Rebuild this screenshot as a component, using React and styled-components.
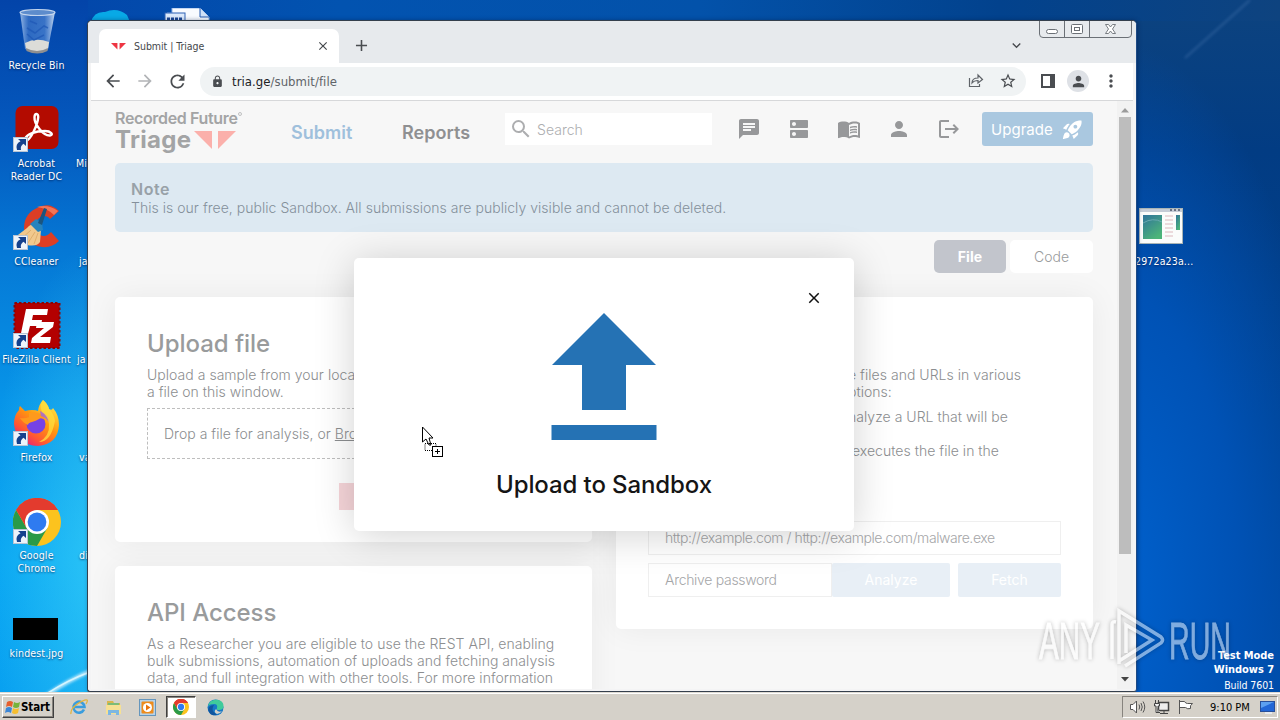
import styled, { createGlobalStyle } from "styled-components";
import {
    MdAdd, MdArrowBack, MdArrowForward, MdChat, MdClose, MdDns, MdExpandMore, MdLock, MdLogout,
    MdMenuBook, MdMoreVert, MdPerson, MdRefresh, MdRocketLaunch, MdSearch, MdStarOutline
} from "react-icons/md";

const SYSTEM_FONT = `"DejaVu Sans Condensed", "DejaVu Sans", sans-serif`;
const PAGE_FONT = `Inter, sans-serif`;

const DESKTOP_ICONS = [
    { label: "Recycle Bin", icon: "bin" },
    { label: "Acrobat Reader DC", icon: "acrobat", shortcut: true },
    { label: "CCleaner", icon: "ccleaner", shortcut: true },
    { label: "FileZilla Client", icon: "filezilla", shortcut: true },
    { label: "Firefox", icon: "firefox", shortcut: true },
    { label: "Google Chrome", icon: "chrome", shortcut: true },
    { label: "kindest.jpg", icon: "picture" },
];

const HIDDEN_LABELS = [
    { top: 157, left: 76, label: "Mi" },
    { top: 255, left: 79, label: "ja" },
    { top: 353, left: 77, label: "ja" },
    { top: 451, left: 79, label: "va" },
    { top: 549, left: 79, label: "di" },
];

const ChromeLogo = ({ size = 48 }) => (
    <svg width={size} height={size} viewBox="0 0 48 48">
        <circle cx="24" cy="24" r="24" fill="#fcc31e" />
        <path d="M24 24L3.2 12A24 24 0 0 1 44.8 12H24z" fill="#e33b2e" />
        <path d="M3.2 12A24 24 0 0 0 24 48L34.4 30 24 24 13.6 30z" fill="#2a9a48" />
        <path d="M3.2 12L13.6 30 24 12h20.8A24 24 0 0 0 3.2 12z" fill="#e33b2e" />
        <circle cx="24" cy="24" r="12" fill="#fff" />
        <circle cx="24" cy="24" r="9.4" fill="#2f7bf0" />
    </svg>
);

const Pictures = {
    bin: () => (
        <svg width="48" height="48" viewBox="0 0 48 48">
            <defs>
                <linearGradient id="glass" x1="0" x2="1">
                    <stop offset="0" stopColor="#b9d3f3" stopOpacity=".8" />
                    <stop offset=".25" stopColor="#4a80cf" stopOpacity=".6" />
                    <stop offset=".7" stopColor="#5d90d8" stopOpacity=".6" />
                    <stop offset="1" stopColor="#dbe8f8" stopOpacity=".9" />
                </linearGradient>
            </defs>
            <path d="M7 4L12 41Q24 48 35 41L42 4z" fill="url(#glass)" />
            <path d="M12 35q11-6 24-1l-1 7q-11 6-22 0z" fill="#dcdcd8" />
            <path d="M13 40q11 6 22 0l-.5 3q-10 5-21 0z" fill="#8f8f90" />
            <ellipse cx="24.500" cy="4.500" rx="17.500" ry="3" fill="#5d8ccc" stroke="#c4d6ee" strokeWidth="1.200" />
            <path d="M14 20l8 5 9-7 4 2M17 13l7 3M14 26l7 6 10-5" stroke="#1e57b5" strokeWidth="1.500" fill="none" opacity=".7" />
        </svg>
    ),
    acrobat: () => (
        <svg width="48" height="48" viewBox="0 0 48 48">
            <rect x="2.500" y="0" width="43" height="43" rx="7" fill="#b30b00" />
            <path d="M12 33c2-5 10-8 20-8 6 0 9 4 5 4.500C30 30 21 18 21.500 11c.3-4 4-4 3.700.3C24.500 19 18 33 13.500 34.500c-2 .6-2.200-.7-1.500-1.500z" stroke="#fff" strokeWidth="2.400" fill="none" />
        </svg>
    ),
    ccleaner: () => (
        <svg width="48" height="48" viewBox="0 0 48 48">
            <path d="M46 7Q37-2 26 3 11 9 11 24q1 17 18 19 10 1 17-6l-8-9q-5 6-11 3-5-3-5-8 1-10 9-11 4 0 6 3z" fill="#dc3e25" />
            <path d="M24 3Q35 0 45 7l-4 4Q34 4 24 3z" fill="#f27558" />
            <path d="M27 20q-8-2-13 4L1 34l13 7q10 2 13-3l1-12z" fill="#f1c88d" />
            <path d="M8 35l10-9M15 39l7-11M21 40l4-11" stroke="#dfae6c" strokeWidth="1" />
            <path d="M17 20l6-5 6 4 1 7-5 2z" fill="#2683bd" />
            <path d="M25 19l6-15 3 1-5 16z" fill="#1b557f" />
        </svg>
    ),
    filezilla: () => (
        <svg width="48" height="48" viewBox="0 0 48 48">
            <rect x="1.500" y="1" width="45" height="45" fill="#b30000" stroke="#8d0303" strokeWidth="2" strokeDasharray="2.500 2" />
            <path d="M13 7h22l-1 6H20l-1 5h10l-1 6H17l-3 12H7z" fill="#fff" />
            <path d="M24 20h17l-1 5-13 10h11l-1 6H18l1-5 12-10h-8z" fill="#fff" />
        </svg>
    ),
    firefox: () => (
        <svg width="48" height="48" viewBox="0 0 48 48">
            <defs>
                <linearGradient id="fox" x1=".9" y1="0" x2=".2" y2="1">
                    <stop offset="0" stopColor="#fff44f" />
                    <stop offset=".45" stopColor="#ff980e" />
                    <stop offset=".75" stopColor="#ff5634" />
                    <stop offset="1" stopColor="#e31587" />
                </linearGradient>
            </defs>
            <path d="M30 0q5 4 6 9 3 2 4-1 6 7 6 17-1 19-21 21Q3 45 1 24q0-9 5-14 0-3 1-4l5 5q4-1 7-1 4 0 6 1 1-7 5-11z" fill="url(#fox)" />
            <circle cx="23" cy="24" r="9.500" fill="#7542e5" />
            <path d="M16 13q12-3 16 7-4-3-6-1-3 2-7 3-4 1-4 3-5-2-8-7 5 1 9-1z" fill="#ff9a1c" />
            <path d="M27 11q9 3 10 13-3-6-9-8z" fill="#9059ff" opacity=".7" />
            <path d="M30 0q5 4 6 9 5 5 6 12-4 21-16 21 11-6 10-18-1-8-7-12-3-6 1-12z" fill="#ffdf3e" opacity=".75" />
        </svg>
    ),
    chrome: () => <ChromeLogo />,
    picture: () => (
        <svg width="48" height="48" viewBox="0 0 48 48">
            <rect x="0" y="22" width="45" height="22" fill="#000" />
        </svg>
    ),
};

const ShortcutArrow = () => (
    <Shortcut>
        <svg width="15" height="15" viewBox="0 0 15 15">
            <rect x=".5" y=".5" width="14" height="14" fill="#edf3fa" stroke="#b8c4d4" />
            <path d="M5 2h8v7l-2.500-2.200Q7 9 8 13H4Q2 7 7.500 4.300z" fill="#15418d" />
        </svg>
    </Shortcut>
);

const TriageMark = ({ width, height, color }) => (
    <svg width={width} height={height} viewBox="0 0 42 19">
        <path d="M0 0h18v18zM24 0h18L24 18z" fill={color} />
    </svg>
);

const Wallpaper = () => (
    <Backdrop width="1280" height="720" viewBox="0 0 1280 720">
        <defs>
            <filter id="soft"><feGaussianBlur stdDeviation="1.500" /></filter>
        </defs>
        <path d="M1185 58L1250 0" stroke="#5b86bd" strokeWidth="1.500" opacity=".5" filter="url(#soft)" />
        <path d="M44 697Q68 680 95 669" stroke="#fff" strokeWidth="3" fill="none" opacity=".8" filter="url(#soft)" />
        <path d="M48 693Q68 680 90 672" stroke="#d4f5ff" strokeWidth="1.500" fill="none" />
    </Backdrop>
);

const DesktopIcons = () => (
    <>
        <IconColumn>
            {DESKTOP_ICONS.map(({ label, icon, shortcut }) => {
                const Picture = Pictures[icon];
                return (
                    <DesktopIcon key={label}>
                        <IconPicture>
                            <Picture />
                            {shortcut && <ShortcutArrow />}
                        </IconPicture>
                        <IconLabel>{label}</IconLabel>
                    </DesktopIcon>
                )
            })}
        </IconColumn>
        {HIDDEN_LABELS.map(({ top, left, label }) => <LooseLabel key={top} top={top} left={left}>{label}</LooseLabel>)}
        <Floating top={8} left={91}>
            <svg width="122" height="16" viewBox="0 0 122 16">
                <path d="M0 14Q3 3 14 4q12-5 22 3l3 7z" fill="#08a9e6" />
                <path d="M81 0h28l9 9v5H76V5h5z" fill="#f8fbff" stroke="#8fb3e4" />
                <path d="M109 0v9h9" fill="#cfe0f7" stroke="#245bb0" />
                <rect x="74" y="5" width="20" height="10" fill="#dbe9fb" stroke="#2f63b5" />
                <path d="M76 11h16" stroke="#1c4795" strokeWidth="3" strokeDasharray="3 1" />
            </svg>
        </Floating>
        <Floating top={208} left={1139}>
            <svg width="44" height="37" viewBox="0 0 44 37">
                <defs>
                    <linearGradient id="thumb" x2=".6" y2="1">
                        <stop offset="0" stopColor="#2f739b" />
                        <stop offset="1" stopColor="#4db479" />
                    </linearGradient>
                </defs>
                <rect x=".5" y=".5" width="43" height="35" fill="#fbfcfb" stroke="#a9b4b5" />
                <path d="M1 2.500h42" stroke="#c5ccd6" strokeWidth="3" />
                <path d="M31 2h11" stroke="#4c5668" strokeWidth="1.500" strokeDasharray="2 2" />
                <rect x="4" y="7" width="19" height="24" fill="url(#thumb)" />
                <path d="M4 15q10-6 19-1" stroke="#69a9b0" fill="none" />
                <path d="M26 8h8M26 12h8M26 16h8M26 20h8M26 24h8M26 28h8" stroke="#dcb8bd" />
                <rect x="37" y="7" width="4" height="15" fill="url(#thumb)" />
            </svg>
        </Floating>
        <LooseLabel top={255} left={1135}>2972a23a...</LooseLabel>
        <BuildInfo>
            <b>Test Mode</b>
            <b>Windows 7</b>
            <span>Build 7601</span>
        </BuildInfo>
    </>
);

const BrowserChrome = () => (
    <>
        <TabStrip>
            <Tab>
                <TriageMark width={15} height={7} color="#ee3542" />
                <TabTitle>Submit | Triage</TabTitle>
                <MdClose size={14} />
            </Tab>
            <NewTab><MdAdd size={19} /></NewTab>
            <TabSearch><MdExpandMore size={17} /></TabSearch>
            <Caption>
                <svg width="93" height="17" viewBox="0 0 93 17" fill="none" stroke="#6b7076">
                    <path d="M.5 0v13q0 3.500 3.500 3.500h85q3.500 0 3.500-3.500V0M25.500 0v16M50.500 0v16" />
                    <rect x="7.500" y="8.500" width="11" height="4" rx="2" fill="#fff" />
                    <rect x="32.500" y="3.500" width="11" height="9" rx="1" fill="#fff" />
                    <rect x="35.500" y="6.500" width="5" height="3" />
                    <path d="M66.500 3.500h3l2 2.500 2-2.500h3L73.500 8l3 4.500h-3l-2-2.500-2 2.500h-3l3-4.500z" fill="#fff" strokeWidth=".9" />
                </svg>
            </Caption>
        </TabStrip>
        <Toolbar>
            <MdArrowBack size={20} />
            <MdArrowForward size={20} color="#b2b4b7" />
            <MdRefresh size={21} />
            <AddressBar>
                <MdLock size={13} />
                <Address>tria.ge<span>/submit/file</span></Address>
                <svg width="16" height="16" viewBox="0 0 16 16" fill="none" stroke="#5f6368" strokeWidth="1.200">
                    <path d="M1.500 5v8.500h10V11M4 10q0-5 6-5V2l4.500 4.500L10 10V7.500Q6 7.500 4 10z" />
                </svg>
                <StarButton><MdStarOutline size={18} /></StarButton>
            </AddressBar>
            <svg width="14" height="14" viewBox="0 0 14 14">
                <path d="M0 0h14v14H0zM2 2v10h7V2z" fill="#4a4d51" fillRule="evenodd" />
            </svg>
            <Avatar><MdPerson size={17} /></Avatar>
            <MdMoreVert size={20} />
        </Toolbar>
    </>
);

const SiteHeader = () => (
    <Header>
        <Logo>
            <LogoTop>Recorded Future<LogoDot /></LogoTop>
            <LogoBottom>Triage <TriageMark width={42} height={19} color="#fbb0ab" /></LogoBottom>
        </Logo>
        <NavLink color="#9fc0dc" width={111}>Submit</NavLink>
        <NavLink color="#8f9092" width={102}>Reports</NavLink>
        <SearchBox><MdSearch size={24} /><span>Search</span></SearchBox>
        <HeaderIcons>
            <MdChat size={24} />
            <MdDns size={24} />
            <MdMenuBook size={24} />
            <MdPerson size={24} />
            <MdLogout size={24} />
        </HeaderIcons>
        <Upgrade>Upgrade <MdRocketLaunch size={23} /></Upgrade>
    </Header>
);

const LeftColumn = () => (
    <Column>
        <Card height={245}>
            <Title>Upload file</Title>
            <Text>Upload a sample from your local<br />a file on this window.</Text>
            <DropZone>Drop a file for analysis, or&nbsp;<u>Browse</u></DropZone>
            <PinkButton />
        </Card>
        <Card height={180}>
            <Title>API Access</Title>
            <Text>
                As a Researcher you are eligible to use the REST API, enabling<br />
                bulk submissions, automation of uploads and fetching analysis<br />
                data, and full integration with other tools. For more information
            </Text>
        </Card>
    </Column>
);

const RightColumn = () => (
    <Column>
        <Card height={332}>
            <Description>
                <Text>e files and URLs in various<br />ptions:</Text>
                <Text>nalyze a URL that will be</Text>
                <Text>&nbsp;executes the file in the</Text>
            </Description>
            <Field tight>http://example.com / http://example.com/malware.exe</Field>
            <FormRow>
                <Field width={184}>Archive password</Field>
                <PaleButton width={118}>Analyze</PaleButton>
                <PaleButton width={103} gap={8}>Fetch</PaleButton>
            </FormRow>
        </Card>
    </Column>
);

const UploadModal = () => (
    <Modal>
        <CloseButton><MdClose size={18} /></CloseButton>
        <svg width="106" height="128" viewBox="0 0 106 128" fill="#2572b4">
            <path d="M53 0l52 52H75v45H31V52H1zM.5 112h105v15H.5z" />
        </svg>
        <ModalTitle>Upload to Sandbox</ModalTitle>
    </Modal>
);

const Taskbar = () => (
    <Bar>
        <StartButton>
            <svg width="16" height="16" viewBox="0 0 16 16">
                <path d="M2 3q3-2 6 0L7 8Q4 6 1 8z" fill="#e65e2c" />
                <path d="M9 3q3 2 6 0l-1 5q-3 2-6 0z" fill="#76b33c" />
                <path d="M1 9q3-2 6 0l-1 5q-3-2-6 0z" fill="#3b86d6" />
                <path d="M8 9q3 2 6 0l-1 5q-3 2-6 0z" fill="#f6be30" />
            </svg>
            Start
        </StartButton>
        <TaskItem>
            <svg width="18" height="18" viewBox="0 0 18 18" fill="none">
                <path d="M14 11.500A5.500 5.500 0 1 1 14.500 9H5" stroke="#3a9ddd" strokeWidth="2.600" />
                <path d="M1 16Q0 11 8 5.500 15 1 17 2q1 1-1 4" stroke="#e2b43b" strokeWidth="1.300" />
            </svg>
        </TaskItem>
        <TaskItem>
            <svg width="17" height="17" viewBox="0 0 17 17">
                <path d="M2 2h6l1 2h6v4H2z" fill="#d9b64c" />
                <path d="M3 4h11v5H3z" fill="#7cbc78" />
                <path d="M1 6h15v9H1z" fill="#f6e094" />
                <path d="M3 16v-5h11v5h-3v-2H6v2z" fill="#7db7e2" />
            </svg>
        </TaskItem>
        <TaskItem>
            <svg width="17" height="17" viewBox="0 0 17 17">
                <rect x=".5" y=".5" width="16" height="16" fill="#b6d2e8" stroke="#6596bd" />
                <rect x="2.500" y="2.500" width="12" height="12" rx="1" fill="#ee8b1b" />
                <circle cx="8.500" cy="8.500" r="4.500" fill="#fff" />
                <path d="M7 5.500v6l4.500-3z" fill="#e8730c" />
            </svg>
        </TaskItem>
        <TaskItem active><ChromeLogo size={16} /></TaskItem>
        <TaskItem>
            <svg width="17" height="17" viewBox="0 0 17 17">
                <circle cx="8.500" cy="8.500" r="8" fill="#1678c6" />
                <path d="M1 7Q3 0 10 .7q7 1 6.500 7Q16 11 12 11q-3 0-2-2 1-4-3-4-4 0-6 2z" fill="#3fcb9b" />
                <path d="M7 6Q3 12 10 15.500 4 18 1.500 12 0 7 7 6z" fill="#10559f" />
                <path d="M9 10q2 4 6 2-2 3-5 3-4-2-1-5z" fill="#d5d1c9" />
            </svg>
        </TaskItem>
        <Tray>
            <svg width="17" height="16" viewBox="0 0 17 16" fill="#fff" stroke="#555">
                <path d="M1.500 5.500H4L7.500 2v12L4 10.500H1.500z" />
                <path d="M10 5.500q1.500 2.500 0 5M12 4q2.500 4 0 8M14 2.500q3.500 5.500 0 11" fill="none" />
            </svg>
            <svg width="17" height="16" viewBox="0 0 17 16" fill="#eee" stroke="#444">
                <rect x="5.500" y="3.500" width="10" height="8" strokeWidth="1.500" />
                <path d="M7 14.500h8M11 12v2M2.500 1v3M5.500 1v3M1.500 4.500h5V7H5v6.500h2M1.500 4.500V7H3v6.500h2" />
            </svg>
            <svg width="17" height="16" viewBox="0 0 17 16" fill="#fff" stroke="#555">
                <path d="M2.500 1v14M2.500 2.500h5q1 2 3 2h5q-3 2-2 5-3 1-5-1h-6z" />
            </svg>
            <Clock>9:10 PM</Clock>
            <svg width="15" height="14" viewBox="0 0 15 14">
                <rect x=".5" y="1.500" width="14" height="10" fill="#2267d6" stroke="#284f99" />
                <path d="M1 2h13L1 8z" fill="#5ca0f0" />
                <path d="M5 13h7" stroke="#edf2fa" strokeWidth="1.500" />
            </svg>
        </Tray>
    </Bar>
);

const Watermark = () => (
    <WatermarkSvg width="200" height="70" viewBox="0 0 200 70">
        <g fill="#fff" stroke="#fff" strokeWidth=".8" fontFamily="Liberation Sans Narrow, Liberation Sans, sans-serif" fontSize="52">
            <text x="4" y="52" textLength="61" lengthAdjust="spacingAndGlyphs">ANY</text>
            <text x="134" y="52" textLength="62" lengthAdjust="spacingAndGlyphs">RUN</text>
        </g>
        <g fill="none" stroke="#fff" strokeWidth="3.500">
            <path d="M77 52V17q0-3 4-2M84 57V4l42 26q3 3 0 6L90 59M91 46V18l26 15-33 21" />
        </g>
    </WatermarkSvg>
);

const Cursor = () => (
    <Floating top={426} left={421}>
        <svg width="24" height="33" viewBox="0 0 24 33" fill="#fff" stroke="#000">
            <path d="M1.500 1v15l3.500-3 3 6h2l-2-7h4z" />
            <path d="M4 17.500h11v7H4z" fill="none" strokeDasharray="1 1" />
            <rect x="11.500" y="20.500" width="10" height="10" />
            <path d="M14 25.500h5M16.500 23v5" />
        </svg>
    </Floating>
);

export default function App() {
    return (
        <Desktop>
            <GlobalStyle />
            <Wallpaper />
            <DesktopIcons />
            <Window>
                <BrowserChrome />
                <Viewport>
                    <Page>
                        <SiteHeader />
                        <Note>
                            <b>Note</b>
                            <span>This is our free, public Sandbox. All submissions are publicly visible and cannot be deleted.</span>
                        </Note>
                        <Switcher>
                            <SwitchButton width={72} active>File</SwitchButton>
                            <SwitchButton width={83}>Code</SwitchButton>
                        </Switcher>
                        <Columns>
                            <LeftColumn />
                            <RightColumn />
                        </Columns>
                        <UploadModal />
                    </Page>
                    <Scrollbar>
                        <svg width="8" height="5" viewBox="0 0 8 5"><path d="M0 4.500L4 0l4 4.500z" fill="#9b9b9b" /></svg>
                        <Thumb />
                        <svg width="8" height="5" viewBox="0 0 8 5"><path d="M0 0h8L4 4.500z" fill="#444" /></svg>
                    </Scrollbar>
                </Viewport>
            </Window>
            <Watermark />
            <Cursor />
            <Taskbar />
        </Desktop>
    )
}

const GlobalStyle = createGlobalStyle`
    body {
        margin: 0;
        overflow: hidden;
    }
    * {
        box-sizing: border-box;
    }
    svg {
        display: block;
        flex: none;
    }
`

const Desktop = styled.div`
    position: relative;
    width: 1280px;
    height: 720px;
    overflow: hidden;
    display: flex;
    flex-direction: column;
    justify-content: flex-end;
    font-family: ${SYSTEM_FONT};
    background:
        radial-gradient(ellipse 120px 320px at 105px 560px, rgba(70, 220, 250, 0.6), transparent),
        linear-gradient(180deg, #0344a9 0, #0458bd 130px, #0578d5 250px, #0794e8 400px, #08a5f2 560px, #079ff0 692px) left / 88px 100% no-repeat,
        linear-gradient(90deg, #0344a9 0, #0253b0 340px, #0352aa 700px, #02428d 1000px, #0e437f 1280px) top / 100% 21px no-repeat,
        radial-gradient(ellipse 230px 550px at 1110px 590px, #0062cf, #0052b5 55%, transparent),
        linear-gradient(180deg, #0d437f 0, #023c83 150px, #00418f 420px, #0048a0 692px);
`

const Backdrop = styled.svg`
    position: absolute;
    inset: 0;
`

const Floating = styled.div`
    position: absolute;
    top: ${(props) => props.top}px;
    left: ${(props) => props.left}px;
`

const IconColumn = styled.div`
    position: absolute;
    top: 8px;
    left: 0;
    width: 73px;
`

const DesktopIcon = styled.div`
    height: 98px;
    display: flex;
    flex-direction: column;
    align-items: center;
`

const IconPicture = styled.div`
    position: relative;
    height: 51px;
    flex: none;
`

const Shortcut = styled.div`
    position: absolute;
    left: 0;
    bottom: 5px;
`

const IconLabel = styled.div`
    width: 72px;
    text-align: center;
    color: #fff;
    font-size: 10.5px;
    line-height: 13px;
    letter-spacing: 0.15px;
    text-wrap: balance;
    text-shadow: 0 1px 2px rgba(0, 20, 70, 0.7);
`

const LooseLabel = styled(IconLabel)`
    position: absolute;
    top: ${(props) => props.top}px;
    left: ${(props) => props.left}px;
    text-align: left;
`

const BuildInfo = styled.div`
    position: absolute;
    top: 649px;
    right: 6px;
    display: flex;
    flex-direction: column;
    align-items: flex-end;
    color: #fff;
    font-size: 11px;
    line-height: 14px;
    b {
        letter-spacing: -0.05px;
    }
    span {
        font-size: 10.5px;
        letter-spacing: -0.1px;
        margin-top: 1px;
    }
`

const Window = styled.div`
    position: absolute;
    top: 20px;
    left: 87px;
    width: 1050px;
    height: 672px;
    padding: 0 3px 2px;
    display: flex;
    flex-direction: column;
    background: #f4f4f5;
    border: 1px solid #35404d;
    border-right-color: #1d4a85;
    border-radius: 5px 5px 3px 3px;
    box-shadow: 1px 0 4px rgba(0, 20, 60, 0.4);
    overflow: hidden;
`

const TabStrip = styled.div`
    height: 42px;
    flex: none;
    display: flex;
    align-items: flex-start;
    margin: 0 -3px;
    padding-left: 11px;
    background: #e7eaed;
`

const Tab = styled.div`
    width: 240px;
    height: 34px;
    margin-top: 8px;
    padding: 0 9px 0 12px;
    display: flex;
    align-items: center;
    background: #fff;
    border-radius: 7px 7px 0 0;
    color: #45484c;
`

const TabTitle = styled.div`
    flex: 1;
    margin-left: 8px;
    font-size: 10.5px;
    letter-spacing: -0.05px;
`

const NewTab = styled.div`
    margin: 15px 0 0 13px;
    color: #4a4d51;
`

const TabSearch = styled.div`
    margin: 16px 14px 0 auto;
    color: #4a4d51;
`

const Caption = styled.div`
    margin-right: 4px;
`

const Toolbar = styled.div`
    height: 38px;
    flex: none;
    display: flex;
    align-items: center;
    gap: 12px;
    padding: 0 12px 1px;
    background: #fff;
    border-bottom: 1px solid #d7d8da;
    color: #4a4d51;
`

const AddressBar = styled.div`
    flex: 1;
    height: 29px;
    margin-right: 3px;
    padding: 0 9px 0 11px;
    display: flex;
    align-items: center;
    gap: 8px;
    background: #f0f3f4;
    border-radius: 15px;
`

const StarButton = styled.div`
    margin-left: 7px;
`

const Address = styled.div`
    flex: 1;
    padding-top: 1px;
    font-size: 13px;
    letter-spacing: 0.05px;
    color: #202124;
    span {
        color: #5f6368;
    }
`

const Avatar = styled.div`
    width: 22px;
    height: 22px;
    display: flex;
    align-items: center;
    justify-content: center;
    border-radius: 50%;
    background: #dee1e6;
`

const Viewport = styled.div`
    flex: 1;
    min-height: 0;
    display: flex;
`

const Page = styled.div`
    position: relative;
    flex: 1;
    padding: 0 24px;
    overflow: hidden;
    background: #f7f7f7;
    font-family: ${PAGE_FONT};
    font-size: 14px;
    font-weight: 300;
    letter-spacing: 0.03px;
    color: #8c8e90;
`

const Scrollbar = styled.div`
    width: 16px;
    display: flex;
    flex-direction: column;
    align-items: center;
    padding: 7px 0;
    background: #f2f2f2;
`

const Thumb = styled.div`
    width: 12px;
    height: 437px;
    margin: 4px 0 auto;
    background: #bdbdbd;
`

const Header = styled.div`
    height: 62px;
    display: flex;
    align-items: flex-start;
`

const Logo = styled.div`
    width: 176px;
    padding-top: 8px;
    color: #a3a4a5;
`

const LogoTop = styled.div`
    display: flex;
    font-size: 16px;
    line-height: 18px;
    font-weight: 600;
    letter-spacing: -0.35px;
`

const LogoDot = styled.i`
    width: 4px;
    height: 4px;
    margin-top: 3px;
    border: 1px solid #c0c1c2;
    border-radius: 50%;
`

const LogoBottom = styled.div`
    display: flex;
    align-items: center;
    gap: 3px;
    font-size: 24px;
    line-height: 26px;
    font-weight: 700;
    letter-spacing: 0.3px;
`

const NavLink = styled.div`
    width: ${(props) => props.width}px;
    padding-top: 21px;
    line-height: 22px;
    font-size: 18px;
    font-weight: 600;
    color: ${(props) => props.color};
`

const SearchBox = styled.div`
    width: 207px;
    height: 32px;
    margin: 12px 0 0 1px;
    padding-left: 4px;
    display: flex;
    align-items: center;
    gap: 4px;
    background: #fff;
    color: #adaeb0;
`

const HeaderIcons = styled.div`
    display: flex;
    gap: 26px;
    margin: 16px 0 0 25px;
    color: #97989a;
`

const Upgrade = styled.div`
    width: 111px;
    height: 34px;
    margin: 11px 0 0 auto;
    padding: 0 9px;
    display: flex;
    align-items: center;
    justify-content: space-between;
    border-radius: 3px;
    background: #aac8e0;
    color: #fff;
    font-size: 15px;
    font-weight: 400;
`

const Note = styled.div`
    height: 69px;
    padding: 16px 16px 0;
    display: flex;
    flex-direction: column;
    border-radius: 5px;
    background: #dde9f2;
    color: #84909b;
    line-height: 19px;
    b {
        font-size: 16px;
        font-weight: 600;
        letter-spacing: 0.5px;
        line-height: 20px;
        margin-bottom: -1px;
        color: #98a1a8;
    }
`

const Switcher = styled.div`
    margin-top: 8px;
    display: flex;
    justify-content: flex-end;
    gap: 4px;
`

const SwitchButton = styled.div`
    width: ${(props) => props.width}px;
    height: 33px;
    line-height: 33px;
    text-align: center;
    border-radius: 5px;
    background: ${(props) => props.active ? "#c2c5cc" : "#fff"};
    color: ${(props) => props.active ? "#fff" : "#999b9c"};
    font-weight: ${(props) => props.active ? 700 : 300};
`

const Columns = styled.div`
    margin-top: 24px;
    display: flex;
    gap: 24px;
`

const Column = styled.div`
    width: 477px;
    display: flex;
    flex-direction: column;
    gap: 24px;
`

const Card = styled.div`
    height: ${(props) => props.height}px;
    padding: 32px;
    border-radius: 5px;
    background: #fff;
    box-shadow: 0 0 32px rgba(0, 0, 0, 0.06);
`

const Title = styled.p`
    margin: 0 0 8px;
    font-size: 24px;
    line-height: 29px;
    font-weight: 500;
    letter-spacing: -0.05px;
    color: #999b9c;
`

const Text = styled.p`
    margin: 0 0 8px;
    line-height: 17px;
    white-space: nowrap;
`

const DropZone = styled.div`
    height: 51px;
    display: flex;
    align-items: center;
    padding-left: 16px;
    border: 1px dashed #bebebe;
`

const PinkButton = styled.div`
    width: 60px;
    height: 27px;
    margin: 24px 0 0 192px;
    background: #f6d5d9;
`

const Description = styled.div`
    height: 155px;
    margin: 37px 0 0 200px;
    p:last-child {
        margin-top: 17px;
    }
`

const Field = styled.div`
    width: ${(props) => props.width ? `${props.width}px` : "100%"};
    height: 34px;
    padding-left: 16px;
    line-height: 32px;
    border: 1px solid #efefef;
    color: #a5a6a8;
    letter-spacing: ${(props) => props.tight ? "-0.42px" : "-0.3px"};
`

const FormRow = styled.div`
    display: flex;
    margin-top: 8px;
`

const PaleButton = styled.div`
    width: ${(props) => props.width}px;
    height: 34px;
    margin-left: ${(props) => props.gap || 0}px;
    line-height: 34px;
    text-align: center;
    border-radius: 2px;
    background: #e8eff6;
    color: #fff;
    font-weight: 400;
`

const Modal = styled.div`
    position: absolute;
    top: 157px;
    left: 263px;
    width: 500px;
    height: 273px;
    padding-top: 55px;
    display: flex;
    flex-direction: column;
    align-items: center;
    border-radius: 5px;
    background: #fff;
    box-shadow: 0 4px 40px rgba(0, 0, 0, 0.18);
`

const CloseButton = styled.div`
    position: absolute;
    top: 31px;
    right: 31px;
    color: #111;
`

const ModalTitle = styled.div`
    margin-top: 29px;
    font-size: 24px;
    line-height: 29px;
    font-weight: 500;
    letter-spacing: -0.1px;
    color: #151515;
`

const WatermarkSvg = styled.svg`
    position: absolute;
    top: 607px;
    left: 1035px;
    opacity: 0.5;
    filter: drop-shadow(0 0 2px rgba(0, 0, 0, 0.5));
`

const Bar = styled.div`
    position: relative;
    height: 28px;
    display: flex;
    align-items: center;
    padding: 2px 2px 0;
    background: #d5d1c9;
    box-shadow: inset 0 1px #dedad2, inset 0 2px #fff;
`

const StartButton = styled.div`
    width: 52px;
    height: 22px;
    margin-right: 10px;
    padding-left: 2px;
    display: flex;
    align-items: center;
    font-size: 11.5px;
    font-weight: 700;
    letter-spacing: -0.1px;
    border: 1px solid;
    border-color: #fff #404040 #404040 #fff;
    box-shadow: inset -1px -1px #87847e;
`

const TaskItem = styled.div`
    width: 30px;
    height: 22px;
    margin-right: 4px;
    display: flex;
    align-items: center;
    justify-content: center;
    border: 1px solid transparent;
    ${(props) => props.active && `
        background: #fff;
        border-color: #404040 #fff #fff #404040;
        box-shadow: inset 1px 1px #87847e;
    `}
`

const Tray = styled.div`
    width: 156px;
    height: 22px;
    margin-left: auto;
    padding: 0 2px 0 6px;
    display: flex;
    align-items: center;
    gap: 7px;
    border: 1px solid;
    border-color: #87847e #fff #fff #87847e;
`

const Clock = styled.div`
    flex: 1;
    margin-left: 9px;
    font-size: 11px;
    white-space: nowrap;
`
